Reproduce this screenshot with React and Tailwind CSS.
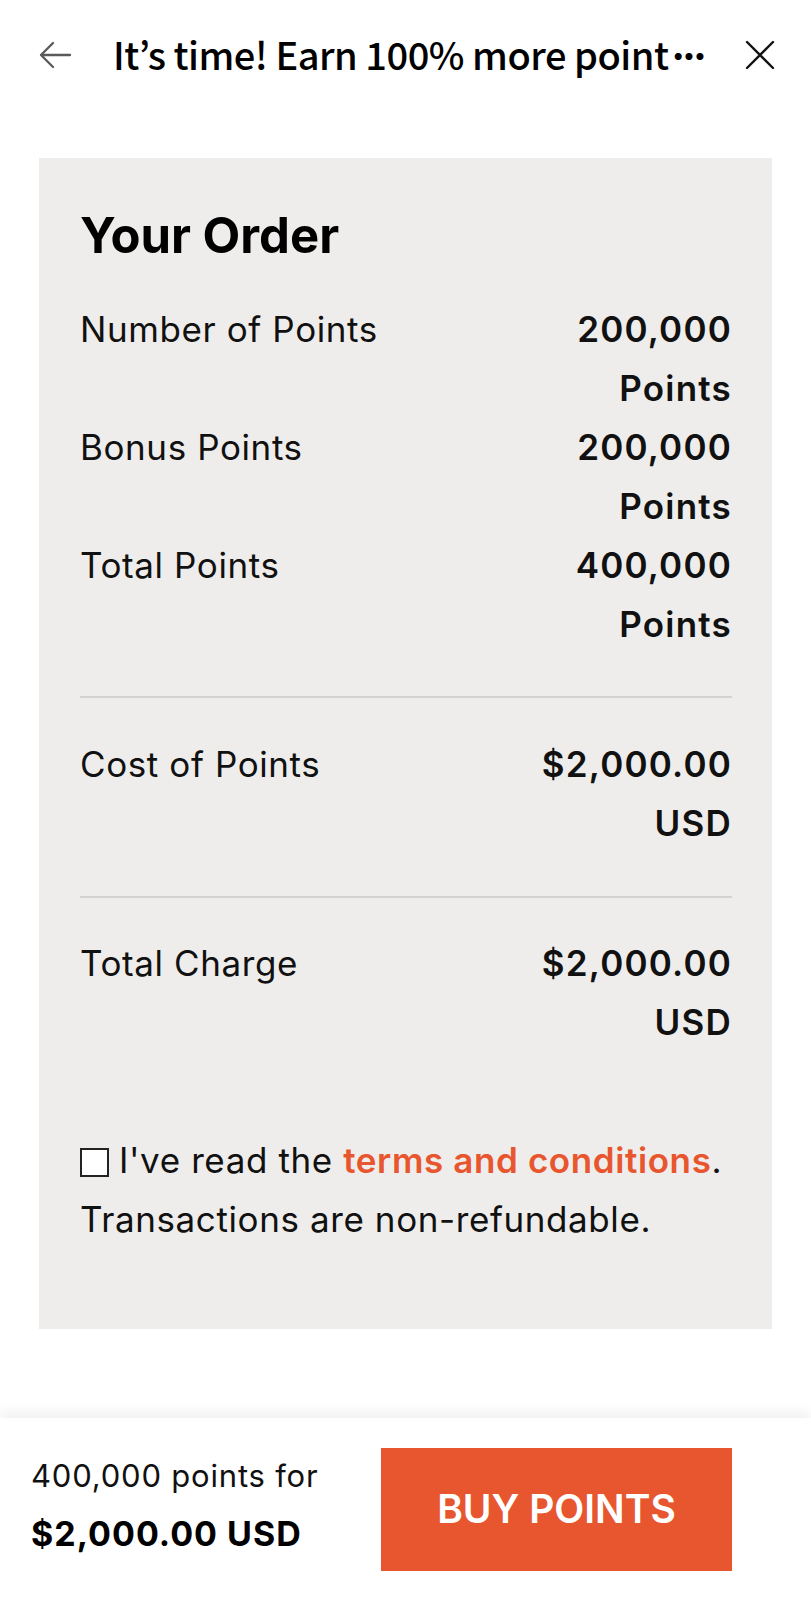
import React from "react";

function Row({ label, value }) {
  return (
    <div className="flex justify-between items-start">
      <div className="text-[35px] leading-[59px] tracking-[0.6px] text-[#111]">{label}</div>
      <div className="w-[225px] text-right text-[35px] leading-[59px] tracking-[1.2px] font-semibold text-[#111]">{value}</div>
    </div>
  );
}

export default function App() {
  return (
    <div className="w-[811px] h-[1600px] bg-white flex flex-col font-['Inter',sans-serif] overflow-hidden">
      {/* header */}
      <div className="h-[110px] flex items-center shrink-0">
        <div className="w-[113px] flex justify-center pr-[4px]">
          <svg width="34" height="28" viewBox="0 0 34 28" fill="none" stroke="#5a5a5a" strokeWidth="2.3" strokeLinecap="round" strokeLinejoin="round">
            <path d="M32 14H3M15 2L3 14l12 12" />
          </svg>
        </div>
        <div className="flex-1 text-[38px] leading-none font-medium text-black tracking-[-0.5px] font-['Noto_Sans_CJK_KR',sans-serif] whitespace-nowrap">
          It’s time! Earn 100% more point<span className="font-['Inter',sans-serif] font-extrabold tracking-[-2.5px] ml-[3px]">···</span>
        </div>
        <div className="w-[91px] flex justify-center pr-[12px]">
          <svg width="30" height="30" viewBox="0 0 30 30" fill="none" stroke="#111" strokeWidth="2.4" strokeLinecap="round">
            <path d="M2 2l26 26M28 2L2 28" />
          </svg>
        </div>
      </div>

      {/* card */}
      <div className="mt-[48px] mx-[39px] bg-[#eeedeb] pl-[41px] pr-[40px] pt-[48px] pb-[80px] shrink-0">
        <div className="text-[49px] leading-[60px] font-bold text-black">Your Order</div>
        <div className="mt-[34px]">
          <Row label="Number of Points" value="200,000 Points" />
          <Row label="Bonus Points" value="200,000 Points" />
          <Row label="Total Points" value="400,000 Points" />
        </div>
        <div className="mt-[42px] h-[2px] bg-[#d3d2d0]" />
        <div className="mt-[37px]">
          <Row label="Cost of Points" value="$2,000.00 USD" />
        </div>
        <div className="mt-[43px] h-[2px] bg-[#d3d2d0]" />
        <div className="mt-[36px]">
          <Row label="Total Charge" value="$2,000.00 USD" />
        </div>
        <div className="mt-[79px] text-[35px] leading-[59px] tracking-[0.6px] text-[#111]">
          <span className="inline-block w-[29px] h-[29px] border-2 border-[#222] bg-white align-[-4px] mr-[10px]" />
          I've read the <span className="text-[#e8562f] font-semibold">terms and conditions</span>.
          <br />
          Transactions are non-refundable.
        </div>
      </div>

      <div className="flex-1" />

      {/* bottom bar */}
      <div className="h-[182px] shrink-0 bg-white shadow-[0_-6px_12px_rgba(0,0,0,0.06)] flex">
        <div className="pl-[31px] pt-[29px]">
          <div className="text-[31px] leading-[58px] tracking-[0.8px] text-[#111]">400,000 points for</div>
          <div className="text-[34px] leading-[58px] tracking-[1px] font-bold text-black">$2,000.00 USD</div>
        </div>
        <div className="ml-auto mr-[79px] mt-[30px] w-[351px] h-[123px] bg-[#e8562f] flex items-center justify-center">
          <span className="text-white text-[39px] font-semibold">BUY POINTS</span>
        </div>
      </div>
    </div>
  );
}
